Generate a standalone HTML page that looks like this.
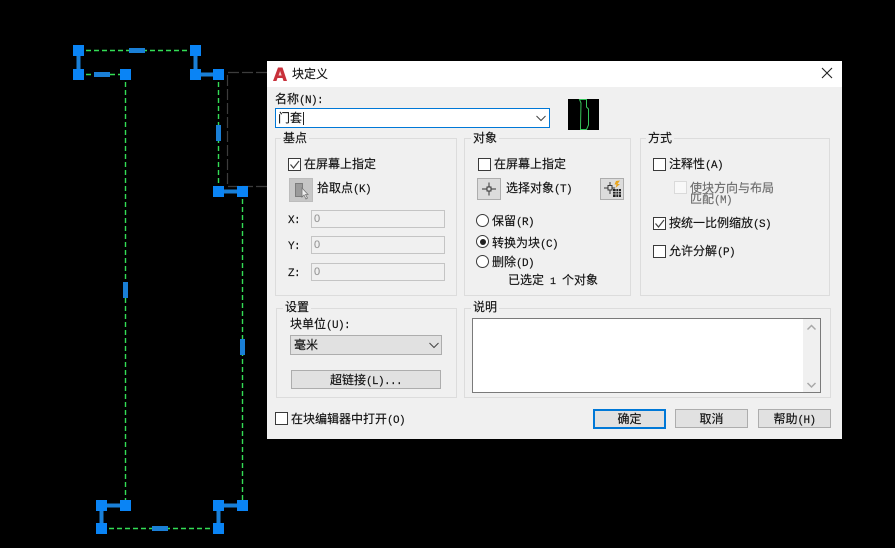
<!DOCTYPE html>
<html><head><meta charset="utf-8">
<style>
html,body{margin:0;padding:0;background:#000;}
#p{position:relative;width:895px;height:548px;overflow:hidden;background:#000;font-family:"Noto Sans CJK SC","WenQuanYi Zen Hei",sans-serif;font-size:12px;color:#111;}
#cad{position:absolute;left:0;top:0;}
#d{position:absolute;left:267px;top:61px;width:575px;height:378px;background:#f0f0f0;-webkit-text-stroke:0.15px currentColor;}
#tb{position:absolute;left:0;top:0;width:575px;height:26px;background:#fff;}
.t,.b,.g,.c,.r,.f{position:absolute;box-sizing:border-box;}
.t{white-space:nowrap;line-height:14px;height:14px;}
.t i,.b i{font-family:"Liberation Mono",monospace;font-style:normal;font-size:11px;letter-spacing:-0.6px;}
.g{border:1px solid #dcdcdc;}
.gt{background:#f0f0f0;padding:0 2px;}
.c{width:13px;height:13px;border:1px solid #3a3a3a;background:#fff;}
.c svg{position:absolute;left:0;top:0;}
.r{width:13px;height:13px;border:1px solid #3a3a3a;border-radius:50%;background:#fff;}
.f{background:#f0f0f0;border:1px solid #c4c4c4;color:#999;font-family:"Liberation Sans",sans-serif;font-size:11px;line-height:16px;padding-left:2px;}
.b{background:#e1e1e1;border:1px solid #adadad;text-align:center;line-height:17px;}
.ib{position:absolute;box-sizing:border-box;background:#dcdcdc;border:1px solid #adadad;}
</style></head><body>
<div id="p">
<svg id="cad" width="895" height="548" viewBox="0 0 895 548">
<g fill="none" stroke="#3c3c3c" stroke-width="1.200" stroke-dasharray="11 3">
<path d="M267 72.500H227.500V186.500H267"/>
</g>
<g fill="none" stroke="#33dd55" stroke-width="1.400" stroke-dasharray="5 3">
<path d="M78 50.500H195"/><path d="M78 74.500H125"/><path d="M125.500 74V505"/><path d="M218.500 74V191"/><path d="M242.500 191V505"/><path d="M101 528.500H218"/>
</g>
<g stroke="#1a7fd6" stroke-width="4" fill="none">
<path d="M78.500 50V74"/><path d="M195.500 50V74"/><path d="M195 74.500H218"/><path d="M218 191.500H242"/><path d="M101 505.500H125"/><path d="M218 505.500H242"/><path d="M101.500 505V528"/><path d="M218.500 505V528"/>
</g>
<g fill="#1a7fd6">
<rect x="129" y="48" width="16" height="5"/><rect x="94" y="72" width="16" height="5"/><rect x="216" y="125" width="5" height="16"/><rect x="123" y="282" width="5" height="16"/><rect x="240" y="339" width="5" height="16"/><rect x="152" y="526" width="16" height="5"/>
</g>
<g fill="#0a84f5">
<rect x="73" y="45" width="11" height="11"/><rect x="190" y="45" width="11" height="11"/><rect x="73" y="69" width="11" height="11"/><rect x="120" y="69" width="11" height="11"/><rect x="190" y="69" width="11" height="11"/><rect x="213" y="69" width="11" height="11"/><rect x="213" y="186" width="11" height="11"/><rect x="237" y="186" width="11" height="11"/><rect x="96" y="500" width="11" height="11"/><rect x="120" y="500" width="11" height="11"/><rect x="213" y="500" width="11" height="11"/><rect x="237" y="500" width="11" height="11"/><rect x="96" y="523" width="11" height="11"/><rect x="213" y="523" width="11" height="11"/>
</g>
</svg>
<div id="d">
<div id="tb"></div>
<svg style="position:absolute;left:5px;top:5px" width="16" height="16" viewBox="0 0 16 16"><path d="M1 15L6 1.500H10.500L15 15H11.500L10.500 12H5.500L4.500 15Z" fill="#c8303a"/><path d="M6.500 9.500H9.700L8.100 5Z" fill="#f4d0d0"/></svg>
<div class="t" style="left:25px;top:6px">块定义</div>
<svg style="position:absolute;left:554px;top:6px" width="12" height="12" viewBox="0 0 12 12"><path d="M1 1L11 11M11 1L1 11" stroke="#222" stroke-width="1.100" fill="none"/></svg>

<div class="t" style="left:8px;top:31px">名称<i>(N):</i></div>
<div class="c" style="left:8px;top:47px;width:275px;height:20px;border:1px solid #0078d7;"></div>
<div class="t" style="left:11px;top:50px">门套</div>
<div style="position:absolute;left:36px;top:51px;width:1px;height:13px;background:#222"></div>
<svg style="position:absolute;left:268px;top:54px" width="12" height="7" viewBox="0 0 12 7"><path d="M1.500 1L6 5.500L10.500 1" stroke="#444" fill="none"/></svg>

<svg style="position:absolute;left:301px;top:38px" width="31" height="31" viewBox="0 0 31 31"><rect width="31" height="31" fill="#000"/><path d="M11.500 0.500H18.500V8L20.500 10V26L18.500 30.500H12.500V27.500L13 4Z" fill="none" stroke="#35c45a"/></svg>

<!-- groups -->
<div class="g" style="left:8px;top:77px;width:182px;height:158px"></div>
<div class="t gt" style="left:14px;top:70px">基点</div>
<div class="g" style="left:197px;top:77px;width:167px;height:158px"></div>
<div class="t gt" style="left:204px;top:70px">对象</div>
<div class="g" style="left:373px;top:77px;width:190px;height:158px"></div>
<div class="t gt" style="left:379px;top:70px">方式</div>
<div class="g" style="left:9px;top:247px;width:181px;height:90px"></div>
<div class="t gt" style="left:16px;top:239px">设置</div>
<div class="g" style="left:197px;top:247px;width:367px;height:90px"></div>
<div class="t gt" style="left:204px;top:239px">说明</div>

<!-- base point -->
<div class="c" style="left:21px;top:97px"><svg width="11" height="11" viewBox="0 0 11 11"><path d="M1.500 5.500L4.500 9L10 2" stroke="#444" stroke-width="1.200" fill="none"/></svg></div>
<div class="t" style="left:37px;top:96px">在屏幕上指定</div>
<div class="ib" style="left:22px;top:117px;width:24px;height:24px;background:#c6c6c6;border-color:#bcbcbc">
<svg width="22" height="22" viewBox="0 0 22 22" style="position:absolute;left:0;top:0"><rect x="5.500" y="4.500" width="7" height="13" fill="#9a9a9a" stroke="#7c7c7c"/><path d="M12 9V18L14 16L16 20L17.500 19L15.500 15.500H18Z" fill="#eee" stroke="#777" stroke-width="0.800"/></svg>
</div>
<div class="t" style="left:50px;top:120px">拾取点<i>(K)</i></div>
<div class="t" style="left:21px;top:151px"><i>X:</i></div>
<div class="f" style="left:44px;top:149px;width:134px;height:18px">0</div>
<div class="t" style="left:21px;top:177px"><i>Y:</i></div>
<div class="f" style="left:44px;top:175px;width:134px;height:18px">0</div>
<div class="t" style="left:21px;top:204px"><i>Z:</i></div>
<div class="f" style="left:44px;top:202px;width:134px;height:18px">0</div>

<!-- objects -->
<div class="c" style="left:211px;top:97px"></div>
<div class="t" style="left:227px;top:96px">在屏幕上指定</div>
<div class="ib" style="left:210px;top:117px;width:24px;height:22px">
<svg width="22" height="20" viewBox="0 0 22 20" style="position:absolute;left:0;top:0"><path d="M4 10H9M13 10H18M11 3.500V8M11 12V16.500" stroke="#333" fill="none"/><rect x="9" y="8" width="4" height="4" fill="none" stroke="#333"/></svg>
</div>
<div class="t" style="left:239px;top:120px">选择对象<i>(T)</i></div>
<div class="ib" style="left:333px;top:117px;width:24px;height:22px">
<svg width="22" height="20" viewBox="0 0 22 20" style="position:absolute;left:0;top:0"><path d="M3 9H7M11 9H14M9 3V6.500M9 11V15" stroke="#333" fill="none"/><rect x="7" y="6.500" width="4" height="4.500" fill="none" stroke="#333"/><path d="M15 2L19 1.500L16.500 5H19L14.500 9L15.500 5.500H13.500Z" fill="#e8a51e"/><rect x="12" y="10" width="8" height="8" fill="#222"/><path d="M12 12.500H20M12 15H20M15 10V18M17.500 10V18" stroke="#ddd" stroke-width="0.700"/></svg>
</div>
<div class="r" style="left:209px;top:153px"></div>
<div class="t" style="left:225px;top:153px">保留<i>(R)</i></div>
<div class="r" style="left:209px;top:174px"><div style="position:absolute;left:2.500px;top:2.500px;width:6px;height:6px;border-radius:50%;background:#222"></div></div>
<div class="t" style="left:225px;top:175px">转换为块<i>(C)</i></div>
<div class="r" style="left:209px;top:194px"></div>
<div class="t" style="left:225px;top:194px">删除<i>(D)</i></div>
<div class="t" style="left:241px;top:212px">已选定<i style="letter-spacing:0;font-size:10px">&nbsp;1&nbsp;</i>个对象</div>

<!-- method -->
<div class="c" style="left:386px;top:97px"></div>
<div class="t" style="left:402px;top:96px">注释性<i>(A)</i></div>
<div class="c" style="left:407px;top:120px;background:#f8f8f8;border-color:#dadada"></div>
<div class="t" style="left:423px;top:120px;color:#6d6d6d">使块方向与布局</div>
<div class="t" style="left:423px;top:131px;color:#6d6d6d">匹配<i>(M)</i></div>
<div class="c" style="left:386px;top:156px"><svg width="11" height="11" viewBox="0 0 11 11"><path d="M1.500 5.500L4.500 9L10 2" stroke="#444" stroke-width="1.200" fill="none"/></svg></div>
<div class="t" style="left:402px;top:155px">按统一比例缩放<i>(S)</i></div>
<div class="c" style="left:386px;top:184px"></div>
<div class="t" style="left:402px;top:183px">允许分解<i>(P)</i></div>

<!-- settings -->
<div class="t" style="left:23px;top:256px">块单位<i>(U):</i></div>
<div class="b" style="left:23px;top:274px;width:152px;height:20px;text-align:left;padding-left:3px;">毫米</div>
<svg style="position:absolute;left:161px;top:281px" width="12" height="7" viewBox="0 0 12 7"><path d="M1.500 1L6 5.500L10.500 1" stroke="#444" fill="none"/></svg>
<div class="b" style="left:24px;top:309px;width:150px;height:19px">超链接<i>(L)...</i></div>

<!-- description -->
<div class="c" style="left:205px;top:257px;width:349px;height:75px;border-color:#7a7a7a"></div>
<div style="position:absolute;left:536px;top:258px;width:17px;height:73px;background:#f0f0f0"></div>
<svg style="position:absolute;left:538px;top:262px" width="13" height="66" viewBox="0 0 13 66"><path d="M2.500 6.500L6.500 2.500L10.500 6.500M2.500 60L6.500 64L10.500 60" stroke="#a8a8a8" stroke-width="1.500" fill="none"/></svg>

<!-- bottom -->
<div class="c" style="left:8px;top:351px"></div>
<div class="t" style="left:24px;top:351px">在块编辑器中打开<i>(O)</i></div>
<div class="b" style="left:326px;top:348px;width:73px;height:20px;border:2px solid #0078d7;line-height:16px">确定</div>
<div class="b" style="left:408px;top:348px;width:73px;height:19px">取消</div>
<div class="b" style="left:491px;top:348px;width:73px;height:19px">帮助<i>(H)</i></div>
</div>
</div>
</body></html>
